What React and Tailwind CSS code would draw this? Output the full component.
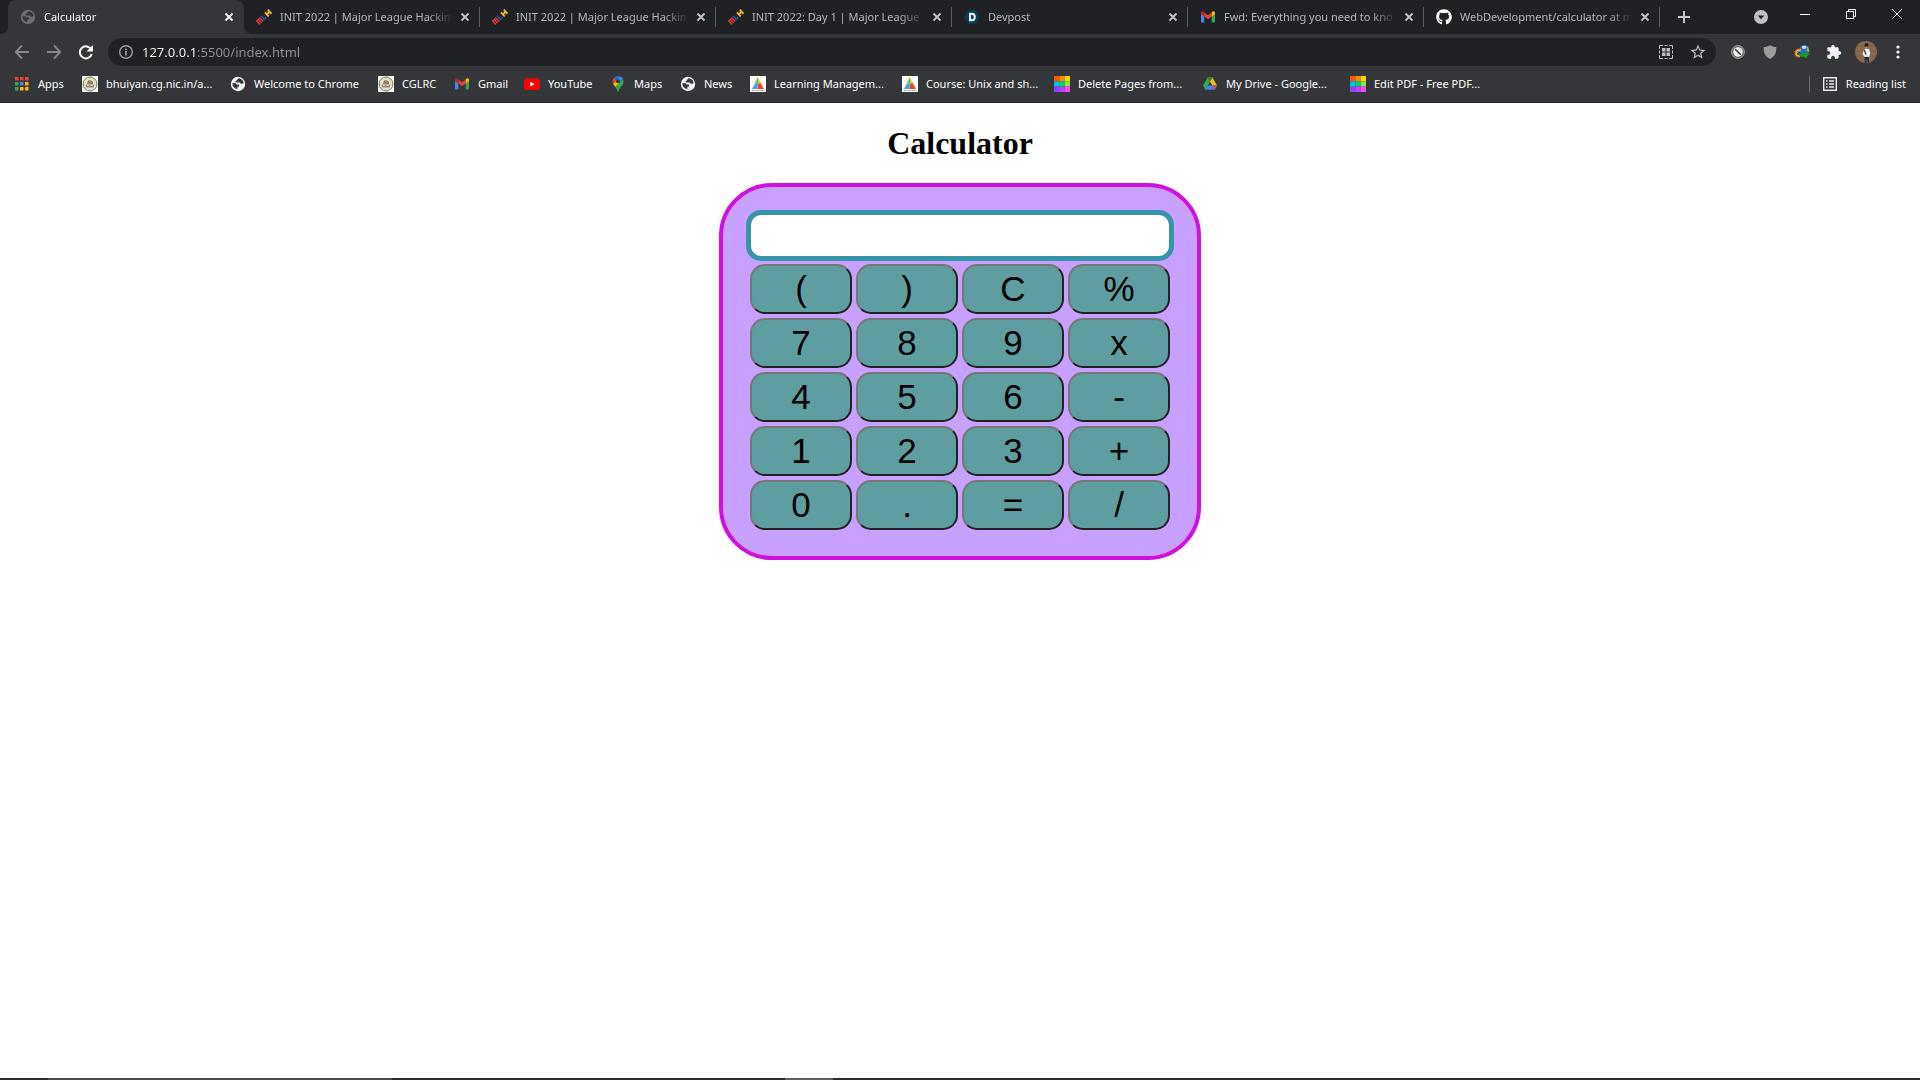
import { useState } from 'react';
import { FaGithub } from 'react-icons/fa';
import { MdExtension, MdStarBorder } from 'react-icons/md';

// Icons
const GlobeIcon = ({ className }) => (
  <svg viewBox="0 0 16 16" className={className} aria-hidden="true">
    <circle cx="8" cy="8" r="7.2" fill="currentColor" />
    <path
      d="M2.300 7.200h2.900c1 0 1.300.700 1.300 1.300h1.700c.800 0 1.100.700.900 1.300l-.5.900H7.400v2.300c-2.700-.3-5-2.600-5.100-5.800zM8.600 2.200c-.2.900-.9 1.200-1.900 1.200v1.300c-.6.500-1.300.5-1.300 1.100 0 .5.500.7 1.300.7h2.600c.9 0 1.200.5 1.200 1.200h1.600c.6 0 .9-.3 1.500-.6-.2-2.500-2.400-4.700-5-4.900z"
      fill="#35363a"
    />
  </svg>
);

const MlhIcon = ({ className }) => (
  <svg viewBox="0 0 16 16" className={className} fill="none" strokeWidth="2" aria-hidden="true">
    <g transform="rotate(-43 8 8) translate(8 8) scale(.92) translate(-8 -8)">
      <path d="M-.8 11V5.800h4.800V11M1.600 5.800V11" stroke="#e5333a" strokeWidth="1.600" />
      <path d="M6.500 5v5h3.200" stroke="#1d539f" />
      <path d="M12.200 5v6M16.400 5v6M12.200 8h4.200" stroke="#f8b92a" />
    </g>
  </svg>
);

const GmailIcon = ({ className }) => (
  <svg viewBox="0 0 16 16" className={className} aria-hidden="true">
    <path d="M1 4.500v8c0 .6.400 1 1 1h2.300V7z" fill="#4285f4" />
    <path d="M15 4.500v8c0 .6-.4 1-1 1h-2.300V7z" fill="#34a853" />
    <path d="M11.700 3.600V7.500L15 5V4c0-1.500-1.600-2.100-2.600-1.300z" fill="#fbbc04" />
    <path d="M4.300 7.500V3.400L8 6.200l3.700-2.800v4.100L8 10.300z" fill="#ea4335" />
    <path d="M1 4v1l3.300 2.500V3.400l-.8-.7C2.500 1.900 1 2.600 1 4z" fill="#c5221f" />
  </svg>
);

const DevpostIcon = ({ className }) => (
  <svg viewBox="0 0 16 16" className={className} aria-hidden="true">
    <path d="M4.200 1h7.600L15.600 8l-3.800 7H4.200L.4 8z" fill="#003e54" />
    <path d="M6 4.700v6.600h1.500c2.200 0 3.300-1.300 3.300-3.300S9.700 4.700 7.500 4.700z" fill="none" stroke="#fff" strokeWidth="1.900" />
  </svg>
);

const AppsIcon = ({ className }) => (
  <svg viewBox="0 0 16 16" className={className} aria-hidden="true">
    <path d="M1 1h3.500v3.500H1zM6 1h3.500v3.500H6zM11 1h3.500v3.500H11z" fill="#ea4335" />
    <path d="M1 6h3.500v3.500H1zM1 11h3.500v3.500H1z" fill="#34a853" />
    <path d="M6 6h3.500v3.500H6z" fill="#4285f4" />
    <path d="M11 6h3.500v3.500H11zM6 11h3.500v3.500H6zM11 11h3.500v3.500H11z" fill="#fbbc04" />
  </svg>
);

const SealIcon = ({ className }) => (
  <svg viewBox="0 0 16 16" className={className} aria-hidden="true">
    <path d="M0 0h16v16H0z" fill="#fff" />
    <circle cx="8" cy="8" r="7" fill="#f5e3c4" stroke="#5d7f61" strokeWidth="1" />
    <circle cx="8" cy="8" r="5.500" fill="none" stroke="#d9cfae" strokeWidth=".6" />
    <path d="M5.500 5.500 7 4l2 .5 2 1.500v2H5z" fill="#8d8064" />
    <path d="M3.500 8.500h9l-1 3h-7z" fill="#7a8791" />
    <path d="M5 9.500h2M8.500 9.500h2.500" stroke="#e9dcbd" />
  </svg>
);

const YoutubeIcon = ({ className }) => (
  <svg viewBox="0 0 16 16" className={className} aria-hidden="true">
    <rect y="2.500" width="16" height="11.500" rx="2.800" fill="#f00" />
    <path d="m6.300 5.800 4.300 2.400-4.300 2.400z" fill="#fff" />
  </svg>
);

const MapsIcon = ({ className }) => (
  <svg viewBox="0 0 16 16" className={className} aria-hidden="true">
    <path d="M8 0a5.500 5.500 0 0 0-4.200 2l3 2.500L10 .4A5.500 5.500 0 0 0 8 0z" fill="#1a73e8" />
    <path d="M3.800 2C2.300 3.800 2.200 6 3.200 8l3.500-3.600z" fill="#ea4335" />
    <path d="m10 .4-3.300 4 2.600 2 3.600-3.800A5.500 5.500 0 0 0 10 .4z" fill="#4285f4" />
    <path d="M3.200 8c.5 1 1.300 1.900 2.100 2.900L9.600 7 6.700 4.400z" fill="#fbbc04" />
    <path d="M12.900 2.900 5.300 10.900c1 1.300 1.700 2.300 2 4 .2 1 1.200 1 1.400 0 .8-3.600 4.800-5.100 4.800-9.300 0-1-.2-1.900-.6-2.700z" fill="#34a853" />
    <circle cx="8" cy="5.300" r="2" fill="#35363a" />
  </svg>
);

const PyramidIcon = ({ className }) => (
  <svg viewBox="0 0 16 16" className={className} aria-hidden="true">
    <path d="M0 0h16v16H0z" fill="#fff" />
    <path d="M8 .8 5 7.200h3z" fill="#6fb544" />
    <path d="M8 .8v6.400h3z" fill="#e3d12b" />
    <path d="M5 7.200h3L7.300 13H2z" fill="#3fa9dc" />
    <path d="M8.300 7.200H11l3 5.800H7.300z" fill="#ea4a25" />
    <path d="M2 14.500h12" stroke="#9aa0a6" strokeDasharray="2 .5" />
  </svg>
);

const PdfIcon = ({ className }) => (
  <svg viewBox="0 0 15 15" className={className} aria-hidden="true">
    <path d="M0 0h5v5H0z" fill="#ff5400" />
    <path d="M5 0h5v5H5z" fill="#ff8e00" />
    <path d="M10 0h5v5h-5z" fill="#ffd200" />
    <path d="M0 5h5v5H0z" fill="#00bdff" />
    <path d="M5 5h5v5H5z" fill="#00d267" />
    <path d="M10 5h5v5h-5z" fill="#81e650" />
    <path d="M0 10h5v5H0z" fill="#8c46ff" />
    <path d="M5 10h5v5H5z" fill="#c240ff" />
    <path d="M10 10h5v5h-5z" fill="#ff47f7" />
  </svg>
);

const DriveIcon = ({ className }) => (
  <svg viewBox="0 0 16 16" className={className} aria-hidden="true">
    <path d="M5.600 1.500 1 9.600l2.300 4.100 4.700-8z" fill="#34a853" />
    <path d="M5.600 1.500h4.800L15 9.600h-4.700z" fill="#fbbc04" />
    <path d="M5.600 1.500h4.800L8 5.700z" fill="#188038" />
    <path d="M5.700 9.600H15l-2.300 4.100H3.300z" fill="#4285f4" />
    <path d="M10.300 9.600H15l-2.300 4.100z" fill="#ea4335" />
  </svg>
);

const CloseIcon = () => (
  <svg viewBox="0 0 16 16" className="size-4" fill="none" stroke="currentColor" strokeWidth="1.800" aria-hidden="true">
    <path d="m4.500 4.500 7 7m0-7-7 7" />
  </svg>
);

const ArrowIcon = ({ className }) => (
  <svg viewBox="0 0 16 16" className={className} fill="none" stroke="currentColor" strokeWidth="1.800" aria-hidden="true">
    <path d="M15 8H2M8 1.500 1.700 8 8 14.500" />
  </svg>
);

const tabs = [
  { title: 'Calculator', icon: GlobeIcon, active: true },
  { title: 'INIT 2022 | Major League Hackin', icon: MlhIcon },
  { title: 'INIT 2022 | Major League Hackin', icon: MlhIcon },
  { title: 'INIT 2022: Day 1 | Major League', icon: MlhIcon },
  { title: 'Devpost', icon: DevpostIcon },
  { title: 'Fwd: Everything you need to kno', icon: GmailIcon },
  { title: 'WebDevelopment/calculator at m', icon: FaGithub },
];

const bookmarks = [
  { title: 'Apps', icon: AppsIcon, width: 'w-17' },
  { title: 'bhuiyan.cg.nic.in/a...', icon: SealIcon, width: 'w-37' },
  { title: 'Welcome to Chrome', icon: GlobeIcon, width: 'w-37' },
  { title: 'CGLRC', icon: SealIcon, width: 'w-19' },
  { title: 'Gmail', icon: GmailIcon, width: 'w-[70px]' },
  { title: 'YouTube', icon: YoutubeIcon, width: 'w-[86px]' },
  { title: 'Maps', icon: MapsIcon, width: 'w-[70px]' },
  { title: 'News', icon: GlobeIcon, width: 'w-[70px]' },
  { title: 'Learning Managem...', icon: PyramidIcon, width: 'w-38' },
  { title: 'Course: Unix and sh...', icon: PyramidIcon, width: 'w-38' },
  { title: 'Delete Pages from...', icon: PdfIcon, width: 'w-37' },
  { title: 'My Drive - Google...', icon: DriveIcon, width: 'w-37' },
  { title: 'Edit PDF - Free PDF...', icon: PdfIcon, width: 'w-38' },
];

const keys = ['(', ')', 'C', '%', '7', '8', '9', 'x', '4', '5', '6', '-', '1', '2', '3', '+', '0', '.', '=', '/'];

function Tab({ title, icon: Icon, active }) {
  return (
    <div
      className={`relative flex w-59 shrink-0 items-center pl-3 ${
        active ? 'rounded-t-lg bg-[#35363a] text-white' : 'text-[#b4b8bc]'
      }`}
    >
      {active && (
        <>
          <span className="absolute bottom-0 -left-2 size-2 bg-[radial-gradient(circle_at_top_left,transparent_8px,#35363a_8px)]" />
          <span className="absolute -right-2 bottom-0 size-2 bg-[radial-gradient(circle_at_top_right,transparent_8px,#35363a_8px)]" />
        </>
      )}
      <Icon className={`size-4 shrink-0 ${active ? 'text-[#6b6e73]' : 'text-white'}`} />
      <button className="ml-2 w-[173px] overflow-hidden text-left whitespace-nowrap [mask-image:linear-gradient(to_right,black_148px,transparent)]">
        {title}
      </button>
      <button aria-label="Close tab" className={`ml-1 ${active ? 'text-white' : 'text-[#c4c7ca]'}`}>
        <CloseIcon />
      </button>
      {!active && <span className="ml-auto h-5 w-px bg-[#5b5d61]" />}
    </div>
  );
}

function TabStrip() {
  return (
    <div className="flex h-[34px] bg-[#202124] pl-2">
      {tabs.map((tab, index) => (
        <Tab key={index} {...tab} />
      ))}
      <button aria-label="New tab" className="ml-2 flex w-8 items-center justify-center text-[#c4c7ca]">
        <svg viewBox="0 0 12 12" className="size-3" stroke="currentColor" strokeWidth="2">
          <path d="M6 0v12M0 6h12" />
        </svg>
      </button>
      <button aria-label="Search tabs" className="ml-auto flex w-[42px] items-center justify-center">
        <svg viewBox="0 0 14 14" className="size-3.5">
          <circle cx="7" cy="7" r="7" fill="#bdc1c6" />
          <path d="M3.800 5.500h6.400L7 9.300z" fill="#202124" />
        </svg>
      </button>
      <div className="flex h-7 text-white">
        <button aria-label="Minimize" className="flex w-[46px] items-center justify-center">
          <svg viewBox="0 0 10 10" className="size-2.5" stroke="currentColor">
            <path d="M0 5.500h10" />
          </svg>
        </button>
        <button aria-label="Restore" className="flex w-[46px] items-center justify-center">
          <svg viewBox="0 0 10 10" className="size-2.5" fill="none" stroke="currentColor">
            <path d="M.5 2.500h7v7h-7zM2.500 2.500v-2h7v7h-2" />
          </svg>
        </button>
        <button aria-label="Close" className="flex w-[46px] items-center justify-center">
          <svg viewBox="0 0 10 10" className="size-2.5" stroke="currentColor">
            <path d="m0 0 10 10M10 0 0 10" />
          </svg>
        </button>
      </div>
    </div>
  );
}

function Toolbar() {
  return (
    <div className="flex items-center bg-[#35363a] pt-1 pr-1.5 pl-1.5">
      <button aria-label="Back" className="flex w-8 justify-center text-[#87898c]">
        <ArrowIcon className="size-4" />
      </button>
      <button aria-label="Forward" className="flex w-8 justify-center text-[#87898c]">
        <ArrowIcon className="size-4 rotate-180" />
      </button>
      <button aria-label="Reload" className="flex w-8 justify-center text-white">
        <svg viewBox="0 0 16 16" className="size-4" aria-hidden="true">
          <path d="M13.200 5.500A6 6 0 1 0 13.700 10" fill="none" stroke="currentColor" strokeWidth="2" />
          <path d="M15 1v6.500H8.500z" fill="currentColor" />
        </svg>
      </button>

      <div className="ml-1.5 flex h-7 flex-1 items-center rounded-full bg-[#202124] pr-0.5 pl-2.5">
        <svg viewBox="0 0 16 16" className="size-4 shrink-0 text-[#9aa0a6]" aria-hidden="true">
          <circle cx="8" cy="8" r="6.300" fill="none" stroke="currentColor" strokeWidth="1.400" />
          <path d="M7.200 7h1.600v4.500H7.200zM7.200 4.400h1.600V6H7.200z" fill="currentColor" />
        </svg>
        <input
          type="text"
          aria-label="Address"
          defaultValue="127.0.0.1:5500/index.html"
          className="ml-2 flex-1 bg-[linear-gradient(to_right,#fff_54px,#8f9398_54px)] bg-clip-text pt-0.5 text-[13px] text-transparent outline-none"
        />
        <button aria-label="QR code" className="flex w-8 justify-center text-[#bdc1c6]">
          <svg viewBox="0 0 16 16" className="size-4" aria-hidden="true">
            <path d="M5 1.500H1.500V5M11 1.500h3.500V5M5 14.500H1.500V11M11 14.500h3.500V11M6.500 1.500h3M6.500 14.500h3M1.500 6.500v3M14.500 6.500v3" fill="none" stroke="currentColor" />
            <path d="M4 4h3.500v3.500H4zM8.500 4H12v3.500H8.500zM4 8.500h3.500V12H4zM8.500 8.500H12V12H8.500z" fill="currentColor" />
          </svg>
        </button>
        <button aria-label="Bookmark this page" className="flex w-8 justify-center text-[#bdc1c6]">
          <MdStarBorder className="size-4.5" />
        </button>
      </div>

      <div className="ml-1.5 flex items-center">
        <button aria-label="Blocker" className="flex w-8 justify-center">
          <svg viewBox="0 0 16 16" className="size-4">
            <circle cx="8" cy="8" r="6.400" fill="#5f6164" stroke="#a3a5a8" />
            <circle cx="8" cy="8" r="4.800" fill="#f0f0f0" />
            <path d="m5.200 5.200 5.600 5.600" stroke="#35363a" strokeWidth="1.600" />
          </svg>
        </button>
        <button aria-label="Shield" className="flex w-8 justify-center">
          <svg viewBox="0 0 16 16" className="size-4">
            <path d="M8 1.200c2 1.200 4 1.700 6.300 1.800.2 5.500-1.300 9.500-6.300 12C3 12.500 1.500 8.500 1.700 3 4 2.900 6 2.400 8 1.200z" fill="#9b9b9b" />
          </svg>
        </button>
        <button aria-label="Download manager" className="flex w-8 justify-center">
          <svg viewBox="0 0 16 16" className="size-4">
            <circle cx="10.300" cy="6" r="5" fill="#2a6cc4" />
            <path d="M8 2.500c1-1 3.500-1.200 4.500 0 .5 1.500-1 2.500-2.500 2.500S7.500 4 8 2.500z" fill="#c4e2fb" />
            <path d="M13 2.500c2 1.200 2.600 3.500 1.800 5.500l-2-1z" fill="#a9b834" />
            <path d="M7 5C3.500 4.500.8 6.500.8 9s2.200 4 5 4" fill="none" stroke="#e23b2e" strokeWidth="1.300" />
            <path d="M7 6C4 5.700 2 7.200 2 9s1.600 3 4 3" fill="none" stroke="#f5cf1d" strokeWidth="1.400" />
            <path d="M7 7.200C5 7 3.400 7.800 3.400 9" fill="none" stroke="#2aa9e0" strokeWidth="1.200" />
            <path d="M3.800 8.800c2 1.400 4.200 1.400 6 .6L9 8.300l7 .9-4.500 5.600-1.200-2c-3 .5-5.800-.6-6.500-4z" fill="#1f9a1c" />
          </svg>
        </button>
        <button aria-label="Extensions" className="flex w-8 justify-center text-[#f1f3f4]">
          <MdExtension className="size-4" />
        </button>
        <button aria-label="Profile" className="flex w-8 justify-center">
          <svg viewBox="0 0 22 22" className="size-[22px] rounded-full">
            <path d="M0 0h22v22H0z" fill="#8a6a4b" />
            <path d="M0 5h22M0 10h22M0 15h22" stroke="#7a5c40" />
            <circle cx="11.500" cy="4" r="2" fill="#1d1a1c" />
            <path d="M10.500 5.500h2v2.500h-2z" fill="#b98968" />
            <path d="M9 8h5l1.300 4-1 4H9.500L7.500 13z" fill="#e9edf3" />
            <path d="m9 8.500 2 5" stroke="#343a45" strokeWidth="1.300" />
            <path d="M9.500 16H14v6h-1.400L12 17.500 11.200 22H9.800z" fill="#1f2c46" />
          </svg>
        </button>
        <button aria-label="Menu" className="flex w-8 justify-center text-white">
          <svg viewBox="0 0 16 16" className="size-4" fill="currentColor">
            <circle cx="8" cy="3" r="1.600" />
            <circle cx="8" cy="8" r="1.600" />
            <circle cx="8" cy="13" r="1.600" />
          </svg>
        </button>
      </div>
    </div>
  );
}

function BookmarksBar() {
  return (
    <div className="flex h-[37px] items-center border-b border-[#252629] bg-[#35363a] px-3.5 text-white">
      <nav className="flex">
        {bookmarks.map(({ title, icon: Icon, width }) => (
          <a key={title} href="#" className={`flex items-center gap-2 whitespace-nowrap ${width}`}>
            <Icon className="size-4 shrink-0 text-[#f1f3f4]" />
            {title}
          </a>
        ))}
      </nav>
      <button className="ml-auto flex items-center gap-2 whitespace-nowrap">
        <span className="mr-1 h-4 w-px bg-[#6a6c70]" />
        <svg viewBox="0 0 16 16" className="size-4" fill="none" stroke="#e8eaed" aria-hidden="true">
          <path d="M1.700 1.700h12.600v12.600H1.700z" strokeWidth="1.400" />
          <path d="M4 5h1.500M7 5h5M4 8h1.500M7 8h5M4 11h1.500M7 11h5" strokeWidth="1.500" />
        </svg>
        Reading list
      </button>
    </div>
  );
}

function Calculator() {
  const [screen, setScreen] = useState('');

  const handleClick = (key) => {
    if (key === 'C') {
      setScreen('');
    } else if (key === '=') {
      try {
        setScreen(String(new Function(`return ${screen || '""'}`)()));
      } catch (error) {
        setScreen('Error');
      }
    } else {
      setScreen(screen + (key === 'x' ? '*' : key));
    }
  };

  return (
    <div className="rounded-[53px] border-4 border-[#d010dc] bg-[#c8a0ff] px-[23px] pt-[23px] pb-[26px]">
      <input
        type="text"
        aria-label="Result"
        value={screen}
        onChange={(e) => setScreen(e.target.value)}
        className="block h-[51px] w-[428px] rounded-[15px] border-5 border-[#3594a8] bg-white px-2 text-[35px] outline-none"
      />
      <div className="mx-1 mt-[3px] grid grid-cols-4 gap-1">
        {keys.map((key) => (
          <button
            key={key}
            onClick={() => handleClick(key)}
            className="h-[50px] rounded-[15px] border-2 border-t-[#767676] border-r-[#212121] border-b-[#212121] border-l-[#767676] bg-[#5f9ea0] text-[35px] leading-10"
          >
            {key}
          </button>
        ))}
      </div>
    </div>
  );
}

export default function App() {
  return (
    <div className="flex min-h-screen flex-col bg-white">
      <header className="font-['Noto_Sans','Open_Sans',sans-serif] text-[11px]">
        <TabStrip />
        <Toolbar />
        <BookmarksBar />
      </header>

      <main className="flex flex-1 flex-col items-center pt-[22px] font-['Liberation_Sans',Arial,sans-serif] text-black">
        <h1 className="mb-[21px] font-['Liberation_Serif','Times_New_Roman',serif] text-[32px] leading-[37px] font-bold">
          Calculator
        </h1>
        <Calculator />
      </main>

      {/* Top edge of the taskbar */}
      <footer className="flex h-0.5 bg-[#2b292a]">
        <span className="ml-12 w-[344px] bg-[#4a494a]" />
        <span className="ml-[393px] w-12 bg-[#5f5f5f]" />
      </footer>
    </div>
  );
}
